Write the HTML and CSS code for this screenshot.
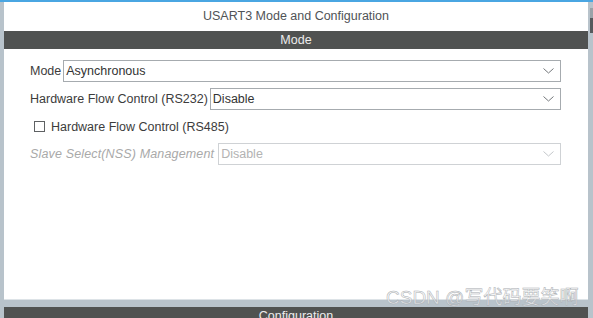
FILE: index.html
```html
<!DOCTYPE html>
<html>
<head>
<meta charset="utf-8">
<link rel="stylesheet" href="styles.css">
</head>
<body>
<div class="topline"></div>
<div class="frame">
  <div class="panel">
    <div class="title">USART3 Mode and Configuration</div>
    <div class="bar">Mode</div>
    <div class="content">
      <div class="row">
        <span class="label">Mode</span>
        <div class="select"><span>Asynchronous</span>
          <svg class="chev" width="11" height="6" viewBox="0 0 11 6"><polyline points="0.5,0.5 5.5,5 10.5,0.5" fill="none" stroke="#73777b" stroke-width="1"/></svg>
        </div>
      </div>
      <div class="row">
        <span class="label">Hardware Flow Control (RS232)</span>
        <div class="select"><span>Disable</span>
          <svg class="chev" width="11" height="6" viewBox="0 0 11 6"><polyline points="0.5,0.5 5.5,5 10.5,0.5" fill="none" stroke="#73777b" stroke-width="1"/></svg>
        </div>
      </div>
      <div class="checkrow">
        <span class="box"></span>
        <span class="label">Hardware Flow Control (RS485)</span>
      </div>
      <div class="row">
        <span class="label disabled">Slave Select(NSS) Management</span>
        <div class="select is-disabled"><span>Disable</span>
          <svg class="chev" width="11" height="6" viewBox="0 0 11 6"><polyline points="0.5,0.5 5.5,5 10.5,0.5" fill="none" stroke="#c4c7ca" stroke-width="1"/></svg>
        </div>
      </div>
    </div>
  </div>
  <div class="rightstrip"><div class="knob-light"></div><div class="knob"></div></div>
</div>
<div class="gap"></div>
<div class="bottombar">Configuration</div>
<div class="watermark">CSDN @写代码要笑啊</div>
</body>
</html>
```
FILE: styles.css
```css
html, body {
  margin: 0;
  padding: 0;
}
body {
  width: 593px;
  height: 318px;
  overflow: hidden;
  background: #b8c3cb;
  font-family: "Liberation Sans", Arial, sans-serif;
  font-size: 12.5px;
  position: relative;
}
.topline {
  height: 2px;
  background: #4aa6e2;
}
.frame {
  display: flex;
  padding-left: 4px;
}
.panel {
  flex: 1;
  background: #ffffff;
  height: 297px;
  display: flex;
  flex-direction: column;
}
.rightstrip {
  width: 5px;
  position: relative;
}
.knob-light {
  position: absolute;
  left: 2px;
  top: 6px;
  width: 3px;
  height: 10px;
  background: #9aa2a8;
}
.knob {
  position: absolute;
  left: 2px;
  top: 16px;
  width: 3px;
  height: 15px;
  background: #55595c;
}
.title {
  height: 29px;
  line-height: 29px;
  text-align: center;
  color: #505356;
}
.bar {
  height: 18px;
  line-height: 18px;
  background: #505251;
  color: #ececec;
  text-align: center;
}
.content {
  padding: 11px 27px 0 26px;
  display: flex;
  flex-direction: column;
}
.row {
  display: flex;
  align-items: center;
  height: 22px;
  margin-bottom: 6px;
  gap: 2px;
}
.label {
  color: #3c3c3c;
  white-space: nowrap;
}
.label.disabled {
  color: #a9a9a9;
  font-style: italic;
  letter-spacing: 0.15px;
  margin-right: 2px;
}
.select {
  flex: 1;
  height: 22px;
  box-sizing: border-box;
  border: 1px solid #a6abaf;
  display: flex;
  align-items: center;
  justify-content: space-between;
  padding: 0 6px 0 2px;
  color: #333333;
}
.select.is-disabled {
  border-color: #cfd2d5;
  color: #b3b3b3;
}
.checkrow {
  display: flex;
  align-items: center;
  height: 33px;
  margin-top: -6px;
  padding-left: 4px;
  gap: 6px;
}
.box {
  width: 11px;
  height: 11px;
  box-sizing: border-box;
  border: 1px solid #5e6163;
  background: #fff;
}
.gap {
  height: 1px;
  background: #dde3e7;
  margin: 0 5px 0 4px;
}
.bottombar {
  margin: 7px 5px 0 4px;
  height: 18px;
  line-height: 18px;
  background: #505251;
  color: #ececec;
  text-align: center;
}
.watermark {
  position: absolute;
  left: 386px;
  top: 286px;
  font-family: "Liberation Sans", "Noto Sans CJK SC", sans-serif;
  font-size: 19px;
  line-height: 24px;
  color: rgba(250, 250, 251, 0.6);
  -webkit-text-stroke: 0.5px #a9adb1;
  white-space: nowrap;
}
```
